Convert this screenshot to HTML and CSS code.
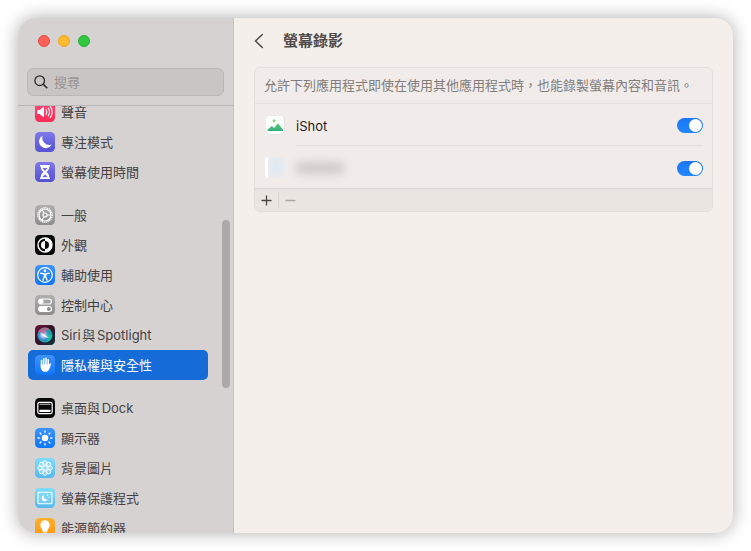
FILE: index.html
```html
<!DOCTYPE html>
<html lang="zh-Hant-TW">
<head>
<meta charset="utf-8">
<meta name="viewport" content="width=device-width, initial-scale=1">
<title>螢幕錄影</title>
<link rel="stylesheet" href="styles.css">
</head>
<body>
<svg class="defs" aria-hidden="true">
  <defs>
    <linearGradient id="g-pink" x2="0" y2="1"><stop stop-color="#ff4a74"/><stop offset="1" stop-color="#fb2a55"/></linearGradient>
    <linearGradient id="g-indigo" x2="0" y2="1"><stop stop-color="#7d78ea"/><stop offset="1" stop-color="#5552d3"/></linearGradient>
    <linearGradient id="g-gray" x2="0" y2="1"><stop stop-color="#b0aeae"/><stop offset="1" stop-color="#8d8b8c"/></linearGradient>
    <linearGradient id="g-blue" x2="0" y2="1"><stop stop-color="#3b93ff"/><stop offset="1" stop-color="#0f76fb"/></linearGradient>
    <linearGradient id="g-cyan" x2="0" y2="1"><stop stop-color="#7edcfb"/><stop offset="1" stop-color="#55b9ee"/></linearGradient>
    <linearGradient id="g-orange" x2="0" y2="1"><stop stop-color="#ffb22e"/><stop offset="1" stop-color="#fb930c"/></linearGradient>
    <linearGradient id="g-green" x2="0" y2="1"><stop stop-color="#5fc878"/><stop offset="1" stop-color="#2fae7c"/></linearGradient>
    <radialGradient id="g-siri" cx=".4" cy=".5" r=".62"><stop stop-color="#f4f0ff"/><stop offset=".22" stop-color="#b3c5ee"/><stop offset=".5" stop-color="#358fd0"/><stop offset=".85" stop-color="#16a78a"/><stop offset="1" stop-color="#175c69"/></radialGradient>
    <linearGradient id="g-siribg" x2="1" y2="1"><stop stop-color="#6c1239"/><stop offset=".5" stop-color="#351129"/><stop offset="1" stop-color="#0d3540"/></linearGradient>
  </defs>
</svg>
<div class="window">
  <aside class="sidebar">
    <div class="lights">
      <button class="light close" type="button" aria-label="關閉"></button>
      <button class="light minimize" type="button" aria-label="縮到最小"></button>
      <button class="light zoom" type="button" aria-label="縮放"></button>
    </div>
    <label class="search">
      <svg width="14" height="14" viewBox="0 0 14 14" fill="none" stroke="#282828" stroke-linecap="round" aria-hidden="true"><circle cx="5.7" cy="5.7" r="4.8" stroke-width="1.3"/><path d="M9.3 9.3l3.5 3.4" stroke-width="1.6"/></svg>
      <input type="search" placeholder="搜尋" aria-label="搜尋">
    </label>
    <div class="scroller">
      <nav class="nav">
        <div class="group">
          <a class="item" href="#"><svg class="icon" viewBox="0 0 20 20"><rect width="20" height="20" rx="4.5" fill="url(#g-pink)"/><path d="M2.3 8h2.4L9 4.6v10.8L4.7 12H2.3z" fill="#fff"/><path d="M11 7.5q1.6 2.5 0 5M13.2 6q2.6 4 0 8M15.4 4.6q3.5 5.4 0 10.8" fill="none" stroke="#fff" stroke-width="1.1" stroke-linecap="round"/></svg>聲音</a>
          <a class="item" href="#"><svg class="icon" viewBox="0 0 20 20"><rect width="20" height="20" rx="4.5" fill="url(#g-indigo)"/><path d="M7.800 3.400A6.700 6.700 0 1 0 16.700 12.500 7 7 0 0 1 7.800 3.400z" fill="#fff"/></svg>專注模式</a>
          <a class="item" href="#"><svg class="icon" viewBox="0 0 20 20"><rect width="20" height="20" rx="4.5" fill="url(#g-indigo)"/><path d="M5 3h10v1.600h-.8c0 3-1 4-2.800 5.400 1.800 1.400 2.800 2.400 2.800 5.400h.8V17H5v-1.600h.8c0-3 1-4 2.800-5.400C6.800 8.600 5.800 7.600 5.800 4.600H5z" fill="#fff"/><path d="M7.400 6h5.200L10 9zM7.200 15.200L10 12.300l2.800 2.900z" fill="#716dde"/></svg>螢幕使用時間</a>
        </div>
        <div class="group">
          <a class="item" href="#"><svg class="icon" viewBox="0 0 20 20"><rect width="20" height="20" rx="4.500" fill="url(#g-gray)"/><g fill="none" stroke="#fff"><circle cx="10" cy="10" r="7.300" stroke-width="1.300" stroke-dasharray="1.200 .71"/><circle cx="10" cy="10" r="6" stroke-width="1.200"/><circle cx="10" cy="10" r="2" stroke-width="1.200"/><path d="M12 10h4M9 8.300L7 4.800M9 11.700L7 15.200" stroke-width="1.200"/></g></svg>一般</a>
          <a class="item" href="#"><svg class="icon" viewBox="0 0 20 20"><rect width="20" height="20" rx="4.500" fill="#080808"/><circle cx="10" cy="10" r="7" fill="none" stroke="#fff" stroke-width="1.400"/><path d="M10 3a7 7 0 0 1 0 14v-3a4 4 0 0 0 0-8z" fill="#fff"/><path d="M10 6a4 4 0 0 0 0 8z" fill="#fff"/></svg>外觀</a>
          <a class="item" href="#"><svg class="icon" viewBox="0 0 20 20"><rect width="20" height="20" rx="4.500" fill="url(#g-blue)"/><circle cx="10" cy="10" r="7.300" fill="none" stroke="#fff" stroke-width="1.200"/><circle cx="10" cy="5.900" r="1.300" fill="#fff"/><path d="M5.800 8.300l3.200.6h2l3.200-.6M9.300 9v2.700l-1.400 3.500M10.700 9v2.700l1.400 3.500" fill="none" stroke="#fff" stroke-width="1.400" stroke-linecap="round"/></svg>輔助使用</a>
          <a class="item" href="#"><svg class="icon" viewBox="0 0 20 20"><rect width="20" height="20" rx="4.500" fill="url(#g-gray)"/><rect x="3.600" y="4" width="12.800" height="5" rx="2.500" fill="none" stroke="#fff" stroke-width="1.200"/><circle cx="6.200" cy="6.500" r="2.400" fill="#fff"/><rect x="3" y="11" width="14" height="6" rx="3" fill="#fff"/><circle cx="13.900" cy="14" r="2" fill="#8f8d8e"/></svg>控制中心</a>
          <a class="item" href="#"><svg class="icon" viewBox="0 0 20 20"><rect width="20" height="20" rx="4.500" fill="url(#g-siribg)"/><circle cx="10" cy="10" r="7.600" fill="url(#g-siri)"/><path d="M3 7C5 2 12 1 15.500 5c-4-1-6 2-6 5C7 7 5 7 3 7z" fill="#e8587b" opacity=".65"/><path d="M9.500 10c3-2 6-1 8 .5-.6 3-3 5.500-6 6.500 2-3 1-5-2-7z" fill="#22d39b" opacity=".55"/><path d="M5 8l5 2 4 3-4-1z" fill="#fff" opacity=".9"/></svg>Siri與Spotlight</a>
          <a class="item selected" href="#" aria-current="page"><svg class="icon" viewBox="0 0 20 20"><rect width="20" height="20" rx="4.500" fill="url(#g-blue)"/><g fill="none" stroke="#fff" stroke-width="1.600" stroke-linecap="round"><path d="M6.500 5.500v6M8.700 3.700V10M11 3.300V10M13.200 4.900V11M15.300 9.200L13.700 12"/></g><path d="M5.700 9.500h8.300v1.900l1.500-1.200c-.6 3-1.700 6.600-4.800 6.600-3.600 0-5-2.300-5-5.300z" fill="#fff"/></svg>隱私權與安全性</a>
        </div>
        <div class="group">
          <a class="item" href="#"><svg class="icon" viewBox="0 0 20 20"><rect width="20" height="20" rx="4.500" fill="#080808"/><rect x="2.800" y="4.300" width="14.400" height="11.400" rx="1.800" fill="none" stroke="#fff" stroke-width="1.200"/><path d="M4.500 6.300h11" stroke="#aaa" stroke-width="1.200"/><rect x="4.500" y="11.700" width="11" height="2.400" rx=".6" fill="#fff"/></svg>桌面與Dock</a>
          <a class="item" href="#"><svg class="icon" viewBox="0 0 20 20"><rect width="20" height="20" rx="4.500" fill="url(#g-blue)"/><circle cx="10" cy="10" r="3.300" fill="#fff"/><path d="M10 3v1.300M10 15.700V17M3 10h1.300M15.700 10H17M5.050 5.050l.9.9M14.050 14.050l.9.9M5.050 14.950l.9-.9M14.050 5.950l.9-.9" stroke="#fff" stroke-width="1.300" stroke-linecap="round"/></svg>顯示器</a>
          <a class="item" href="#"><svg class="icon" viewBox="0 0 20 20"><rect width="20" height="20" rx="4.500" fill="url(#g-cyan)"/><g fill="#fff" fill-opacity=".25" stroke="#fff" stroke-width=".9"><circle cx="10" cy="10" r="2.200"/><circle cx="10" cy="4.900" r="2.200"/><circle cx="13.600" cy="6.400" r="2.200"/><circle cx="15.100" cy="10" r="2.200"/><circle cx="13.600" cy="13.600" r="2.200"/><circle cx="10" cy="15.100" r="2.200"/><circle cx="6.400" cy="13.600" r="2.200"/><circle cx="4.900" cy="10" r="2.200"/><circle cx="6.400" cy="6.400" r="2.200"/></g></svg>背景圖片</a>
          <a class="item" href="#"><svg class="icon" viewBox="0 0 20 20"><rect width="20" height="20" rx="4.500" fill="url(#g-cyan)"/><rect x="3" y="4.300" width="14" height="11.400" rx="1" fill="#fff" fill-opacity=".12" stroke="#fff" stroke-width="1.100"/><path d="M8.600 7a3.300 3.300 0 1 0 4.300 4.300A3.500 3.500 0 0 1 8.600 7z" fill="#fff"/><circle cx="12.500" cy="7.300" r=".7" fill="#fff"/><circle cx="14" cy="9.300" r=".5" fill="#fff"/></svg>螢幕保護程式</a>
          <a class="item" href="#"><svg class="icon" viewBox="0 0 20 20"><rect width="20" height="20" rx="4.500" fill="url(#g-orange)"/><path d="M10 2.300a4.700 4.700 0 0 0-4.700 4.700c0 3 2.300 4 2.500 6.800h4.400c.2-2.800 2.500-3.800 2.500-6.800A4.700 4.700 0 0 0 10 2.300zM8 14.600h4v2.200H8z" fill="#fff"/></svg>能源節約器</a>
        </div>
      </nav>
      <div class="thumb"></div>
    </div>
  </aside>
  <main class="main">
    <header class="header">
      <button class="back" type="button" aria-label="返回"><svg width="10" height="16" viewBox="0 0 10 16" fill="none" stroke="#4c4a49" stroke-width="1.500" stroke-linecap="round" stroke-linejoin="round"><path d="M8.300 1.500L1.500 8l6.800 6.500"/></svg></button>
      <h1>螢幕錄影</h1>
    </header>
    <section class="panel">
      <p class="note">允許下列應用程式即使在使用其他應用程式時，也能錄製螢幕內容和音訊。</p>
      <label class="app">
        <svg class="app-icon" viewBox="0 0 20 20" aria-hidden="true"><rect x="1" y="1" width="18.500" height="18.500" rx="4" fill="#d9d5d3"/><rect x="1" y="1" width="18" height="18" rx="4" fill="#fbfffc"/><circle cx="9" cy="5.800" r="1.400" fill="#82cf77"/><path d="M2.500 16v-1.300L6.800 11l2.200 2 4-4.800 5 6.600V16z" fill="url(#g-green)"/></svg>
        <span class="app-body"><span>iShot</span><input class="switch" type="checkbox" role="switch" checked></span>
      </label>
      <label class="app">
        <span class="hidden-icon"></span>
        <span class="app-body"><span class="hidden-name"></span><input class="switch" type="checkbox" role="switch" checked></span>
      </label>
      <div class="toolbar">
        <button type="button" aria-label="加入"><svg width="11" height="11" viewBox="0 0 11 11"><path d="M5.500 1v9M1 5.500h9" stroke="#4a4847" stroke-width="1.300" stroke-linecap="round"/></svg></button>
        <button type="button" aria-label="移除" disabled><svg width="11" height="11" viewBox="0 0 11 11"><path d="M1 5.500h9" stroke="#aaa6a4" stroke-width="1.300" stroke-linecap="round"/></svg></button>
      </div>
    </section>
  </main>
</div>
</body>
</html>
```
FILE: styles.css
```css
* {
  box-sizing: border-box;
}

body {
  margin: 0;
  height: 100vh;
  padding: 18px;
  background: #fff;
  color: #444141;
  font: 13px/20px Inter, "Noto Sans CJK TC", sans-serif;
  text-autospace: normal;
  overflow: hidden;
}

button {
  padding: 0;
  border: 0;
  background: none;
}

.defs {
  position: absolute;
  width: 0;
  height: 0;
}

.window {
  display: flex;
  height: 100%;
  overflow: hidden;
  border-radius: 18px;
  background: #f4efeb;
  box-shadow: 0 0 18px rgba(0, 0, 0, 0.32);
}

.sidebar {
  display: flex;
  flex-direction: column;
  flex: 0 0 216px;
  min-width: 0;
  border-right: 1px solid #c5c1c1;
  background: #d6d2d2;
}

.lights {
  display: flex;
  gap: 8px;
  padding: 17px 20px 21px;
}

.light {
  width: 12px;
  height: 12px;
  border: 1px solid;
  border-radius: 50%;
}

.close {
  background: #fe5f57;
  border-color: #e2463f;
}

.minimize {
  background: #febc2e;
  border-color: #f2a125;
}

.zoom {
  background: #31c940;
  border-color: #27aa31;
}

.search {
  display: flex;
  align-items: center;
  gap: 6px;
  height: 28px;
  margin: 0 9px 9px;
  padding: 0 6px;
  border: 1px solid #bbb7b7;
  border-radius: 6px;
  background: #c9c5c4;
}

.search svg {
  flex: none;
}

.search input {
  flex: 1;
  min-width: 0;
  padding: 0;
  border: 0;
  outline: 0;
  background: none;
  color: inherit;
  font: inherit;
}

.search input::placeholder {
  color: #989493;
}

.scroller {
  position: relative;
  flex: 1;
  min-height: 0;
  overflow: hidden;
  border-top: 1px solid #b9b5b5;
}

.nav {
  display: flex;
  flex-direction: column;
  gap: 13px;
  margin: -9px 25px 0 10px;
}

.item {
  display: flex;
  align-items: center;
  gap: 6px;
  height: 30px;
  padding: 0 7px;
  border-radius: 5px;
  color: inherit;
  text-decoration: none;
  white-space: nowrap;
}

.selected {
  background: #156cd8;
  color: #fff;
}

.icon,
.app-icon {
  flex: none;
  width: 20px;
  height: 20px;
}

.thumb {
  position: absolute;
  top: 114px;
  right: 3px;
  width: 8px;
  height: 168px;
  border-radius: 4px;
  background: #aca8a8;
}

.main {
  flex: 1;
  min-width: 0;
  padding: 0 20px;
}

.header {
  display: flex;
  align-items: center;
  gap: 19px;
  height: 49px;
  padding-bottom: 3px;
}

.back {
  display: flex;
}

h1 {
  margin: 0;
  color: #4d4a49;
  font-size: 15px;
  font-weight: 700;
}

.panel {
  overflow: hidden;
  border: 1px solid #e3dedb;
  border-radius: 6px;
  background: #f1ecea;
}

.note {
  margin: 0;
  padding: 7px 9px 8px;
  border-bottom: 1px solid #e4dfdc;
  color: #817d7b;
}

.app {
  display: flex;
  align-items: center;
  gap: 11px;
  padding: 0 9px 0 10px;
  color: #1f1e1d;
}

.app-body {
  display: flex;
  align-items: center;
  justify-content: space-between;
  flex: 1;
  height: 42px;
  padding-top: 2px;
  border-bottom: 1px solid #e3dedb;
}

.app + .app .app-body {
  border-bottom: 0;
}

.hidden-icon {
  width: 20px;
  height: 20px;
  border-left: 3px solid #fff;
  border-radius: 3px;
  background: radial-gradient(#dfe9f3, #ececee);
}

.hidden-name {
  width: 48px;
  height: 12px;
  border-radius: 5px;
  background: #d0cbc8;
  filter: blur(4px);
}

.switch {
  appearance: none;
  display: flex;
  justify-content: flex-end;
  width: 26px;
  height: 15px;
  margin: 0;
  padding: 1px;
  border-radius: 8px;
  background: linear-gradient(#1976f7, #2388ff);
}

.switch::before {
  content: "";
  width: 13px;
  height: 13px;
  border-radius: 50%;
  background: #fff;
}

.switch:not(:checked) {
  justify-content: flex-start;
  background: #c9c5c3;
}

.toolbar {
  display: flex;
  align-items: center;
  height: 23px;
  border-top: 1px solid #dcd7d4;
  background: #eae5e1;
}

.toolbar button {
  display: grid;
  place-items: center;
  width: 23px;
  height: 16px;
}

.toolbar button + button {
  border-left: 1px solid #d6d1ce;
}
```
